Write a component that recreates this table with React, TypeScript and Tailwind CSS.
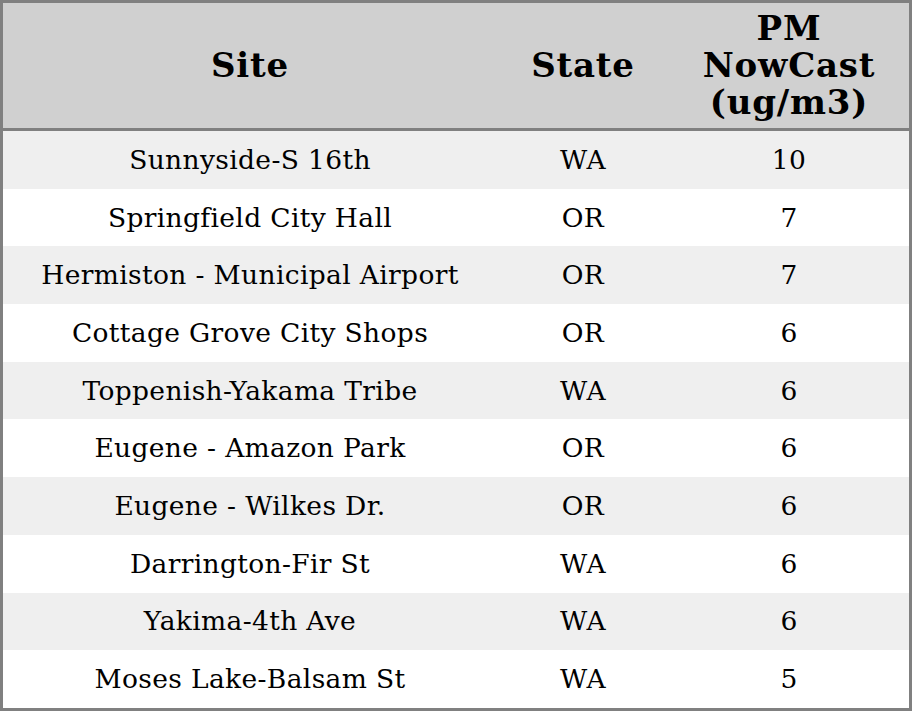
import React from 'react';

const rows = [
  { site: 'Sunnyside-S 16th', state: 'WA', pm: '10' },
  { site: 'Springfield City Hall', state: 'OR', pm: '7' },
  { site: 'Hermiston - Municipal Airport', state: 'OR', pm: '7' },
  { site: 'Cottage Grove City Shops', state: 'OR', pm: '6' },
  { site: 'Toppenish-Yakama Tribe', state: 'WA', pm: '6' },
  { site: 'Eugene - Amazon Park', state: 'OR', pm: '6' },
  { site: 'Eugene - Wilkes Dr.', state: 'OR', pm: '6' },
  { site: 'Darrington-Fir St', state: 'WA', pm: '6' },
  { site: 'Yakima-4th Ave', state: 'WA', pm: '6' },
  { site: 'Moses Lake-Balsam St', state: 'WA', pm: '5' },
];

export default function App() {
  return (
    <div
      className="h-[711px] w-[912px] border-[3px] border-[#808080] bg-white text-black"
      style={{ fontFamily: '"DejaVu Serif", serif' }}
    >
      <div className="flex h-[128px] items-center border-b-[3px] border-[#808080] bg-[#d0d0d0] text-[34px] font-bold leading-[37px] tracking-[0.8px]">
        <div className="w-[494px] text-center">Site</div>
        <div className="w-[172px] text-center">State</div>
        <div className="flex-1 text-center">
          PM
          <br />
          NowCast
          <br />
          (ug/m3)
        </div>
      </div>
      <div className="flex flex-col">
        {rows.map((r, i) => (
          <div
            key={r.site}
            className={`flex h-[57.7px] items-center text-[26.5px] tracking-[0.35px] ${
              i % 2 === 0 ? 'bg-[#efefef]' : 'bg-white'
            }`}
          >
            <div className="w-[494px] text-center">{r.site}</div>
            <div className="w-[172px] text-center">{r.state}</div>
            <div className="flex-1 text-center">{r.pm}</div>
          </div>
        ))}
      </div>
    </div>
  );
}
